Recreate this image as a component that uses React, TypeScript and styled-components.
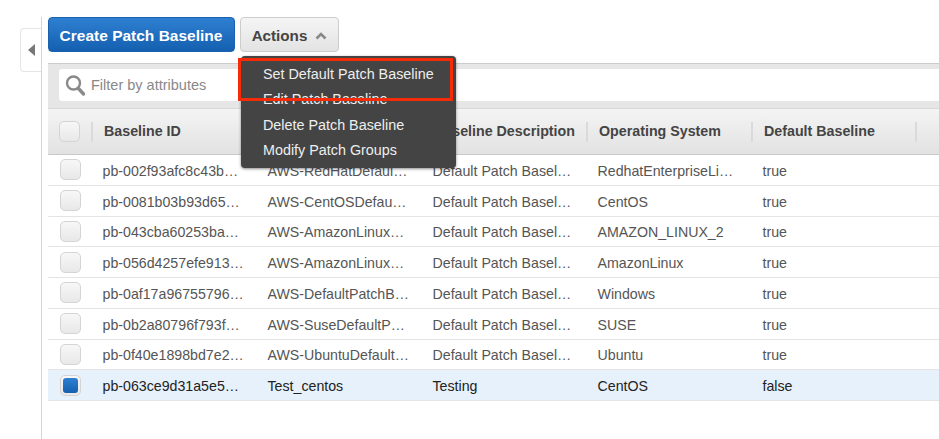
import styled, { createGlobalStyle } from "styled-components";

const GlobalStyle = createGlobalStyle`
  html, body {
    margin: 0;
    padding: 0;
    background: #fff;
    font-family: "Liberation Sans", Arial, sans-serif;
    overflow: hidden;
  }
`;

const Page = styled.div`
  display: flex;
  width: 939px;
  height: 439px;
  overflow: hidden;
  padding-top: 17px;
  box-sizing: border-box;
`;

const Rail = styled.div`
  width: 42px;
  flex: none;
  padding: 11px 0 0 20px;
  box-sizing: border-box;
`;

const RailTab = styled.button`
  display: flex;
  align-items: center;
  justify-content: center;
  width: 22px;
  height: 44px;
  padding: 0;
  background: #fff;
  border: 1px solid #e6e6e6;
  border-right: none;
  border-radius: 4px 0 0 4px;
  box-sizing: border-box;
`;

const Main = styled.main`
  flex: 1;
  min-width: 0;
  border-left: 1px solid #d5d5d5;
  padding-left: 6px;
  margin-left: -1px;
  position: relative;
`;

const Toolbar = styled.div`
  display: flex;
  gap: 5px;
  height: 35px;
  margin-bottom: 11px;
`;

const PrimaryButton = styled.button`
  width: 187px;
  padding: 2px 1px 0 0;
  font: bold 15.5px "Liberation Sans", Arial, sans-serif;
  color: #fff;
  background: linear-gradient(#2f80d2, #145fb0);
  border: 1px solid #1a62ad;
  border-radius: 4px;
`;

const ActionsButton = styled.button`
  display: flex;
  align-items: center;
  justify-content: center;
  gap: 8px;
  width: 99px;
  padding: 2px 0 0;
  font: bold 15.2px "Liberation Sans", Arial, sans-serif;
  color: #444;
  background: linear-gradient(#f5f5f5, #e3e3e3);
  border: 1px solid #ccc;
  border-radius: 4px;
`;

const Menu = styled.ul`
  position: absolute;
  left: 199px;
  top: 39px;
  width: 215px;
  height: 112px;
  margin: 0;
  padding: 6px 0 0 22px;
  box-sizing: border-box;
  list-style: none;
  background: #444;
  border-radius: 4px;
  box-shadow: 0 1px 3px rgba(0, 0, 0, 0.45);
  z-index: 2;
`;

const MenuItem = styled.li`
  height: 25.4px;
  line-height: 25.4px;
  font-size: 14.35px;
  color: #eee;
  white-space: nowrap;
`;

const Highlight = styled.div`
  position: absolute;
  left: 196px;
  top: 41px;
  width: 215px;
  height: 43px;
  box-sizing: border-box;
  border: 3px solid #f52b0a;
  z-index: 3;
`;

const FilterBar = styled.div`
  display: flex;
  padding: 5px 0 7px 11px;
  background: #e6e6e6;
  border-top: 1px solid #ccc;
`;

const FilterBox = styled.div`
  display: flex;
  align-items: center;
  gap: 6px;
  flex: 1;
  height: 32px;
  padding-left: 6px;
  background: #fff;
  border-radius: 3px 0 0 3px;
  font-size: 14.5px;
  color: #888;
`;

const Row = styled.div<{ $selected?: boolean }>`
  display: grid;
  grid-template-columns: 44px repeat(5, 165px);
  align-items: center;
  height: 30.75px;
  box-sizing: border-box;
  border-bottom: 1px solid #e4e4e4;
  font-size: 14.2px;
  color: ${(p) => (p.$selected ? "#222" : "#555")};
  background: ${(p) => (p.$selected ? "#e7f1fb" : "#fff")};
`;

const HeaderRow = styled.div`
  display: grid;
  grid-template-columns: 44px repeat(5, 165px);
  align-items: center;
  height: 47px;
  box-sizing: border-box;
  background: linear-gradient(#f4f4f4, #e2e2e2);
  border-top: 1px solid #d8d8d8;
  border-bottom: 1px solid #c9c9c9;
  font-size: 14.25px;
  font-weight: bold;
  color: #444;
`;

const HeaderCell = styled.div`
  display: flex;
  align-items: center;
  height: 20px;
  margin-left: -1px;
  padding: 0 0 1px 11px;
  border-left: 2px solid #dadada;
  box-sizing: border-box;
  white-space: nowrap;

  &:last-child {
    border-right: 2px solid #dadada;
  }
`;

const Cell = styled.div`
  padding-left: 10.5px;
  padding-top: 2px;
  white-space: nowrap;
  overflow: hidden;
`;

const CheckCell = styled.div<{ $header?: boolean }>`
  display: flex;
  padding-left: ${(p) => (p.$header ? "11px" : "12px")};
`;

const Check = styled.span<{ $checked?: boolean }>`
  display: flex;
  align-items: center;
  justify-content: center;
  width: 21px;
  height: 21px;
  box-sizing: border-box;
  background: linear-gradient(#f7f7f7, #e8e8e8);
  border: 1px solid #d4d4d4;
  border-radius: 5px;

  &::after {
    content: "";
    display: ${(p) => (p.$checked ? "block" : "none")};
    width: 15px;
    height: 15px;
    border-radius: 3px;
    background: linear-gradient(#2f80d2, #145fb0);
  }
`;

const columns = ["Baseline ID", "Patch Baseline Name", "Baseline Description", "Operating System", "Default Baseline"];

const rows = [
  ["pb-002f93afc8c43b…", "AWS-RedHatDefaul…", "Default Patch Basel…", "RedhatEnterpriseLi…", "true"],
  ["pb-0081b03b93d65…", "AWS-CentOSDefau…", "Default Patch Basel…", "CentOS", "true"],
  ["pb-043cba60253ba…", "AWS-AmazonLinux…", "Default Patch Basel…", "AMAZON_LINUX_2", "true"],
  ["pb-056d4257efe913…", "AWS-AmazonLinux…", "Default Patch Basel…", "AmazonLinux", "true"],
  ["pb-0af17a96755796…", "AWS-DefaultPatchB…", "Default Patch Basel…", "Windows", "true"],
  ["pb-0b2a80796f793f…", "AWS-SuseDefaultP…", "Default Patch Basel…", "SUSE", "true"],
  ["pb-0f40e1898bd7e2…", "AWS-UbuntuDefault…", "Default Patch Basel…", "Ubuntu", "true"],
  ["pb-063ce9d31a5e5…", "Test_centos", "Testing", "CentOS", "false"],
];

const menuItems = ["Set Default Patch Baseline", "Edit Patch Baseline", "Delete Patch Baseline", "Modify Patch Groups"];

const SearchIcon = () => (
  <svg width="20" height="22" viewBox="0 0 20 22" fill="none" stroke="#8a8a8a">
    <circle cx="8.5" cy="9" r="6.5" strokeWidth="2.4" />
    <path d="M13.5 14.5 L18.5 20" strokeWidth="3.4" strokeLinecap="round" />
  </svg>
);

export default function App() {
  return (
    <>
      <GlobalStyle />
      <Page>
        <Rail>
          <RailTab aria-label="Collapse">
            <svg width="8" height="12" viewBox="0 0 8 12">
              <path d="M7 0 V12 L0 6 Z" fill="#777" />
            </svg>
          </RailTab>
        </Rail>
        <Main>
          <Toolbar>
            <PrimaryButton>Create Patch Baseline</PrimaryButton>
            <ActionsButton>
              Actions
              <svg width="12" height="8" viewBox="0 0 12 8">
                <path d="M1.5 6.5 L6 2 L10.5 6.5" fill="none" stroke="#888" strokeWidth="2.6" />
              </svg>
            </ActionsButton>
          </Toolbar>
          <Menu>
            {menuItems.map((item) => (
              <MenuItem key={item}>{item}</MenuItem>
            ))}
          </Menu>
          <Highlight />
          <FilterBar>
            <FilterBox>
              <SearchIcon />
              Filter by attributes
            </FilterBox>
          </FilterBar>
          <HeaderRow>
            <CheckCell $header>
              <Check />
            </CheckCell>
            {columns.map((c) => (
              <HeaderCell key={c}>{c}</HeaderCell>
            ))}
          </HeaderRow>
          {rows.map((row, i) => (
            <Row key={row[0]} $selected={i === rows.length - 1}>
              <CheckCell>
                <Check $checked={i === rows.length - 1} />
              </CheckCell>
              {row.map((value, j) => (
                <Cell key={j}>{value}</Cell>
              ))}
            </Row>
          ))}
        </Main>
      </Page>
    </>
  );
}
